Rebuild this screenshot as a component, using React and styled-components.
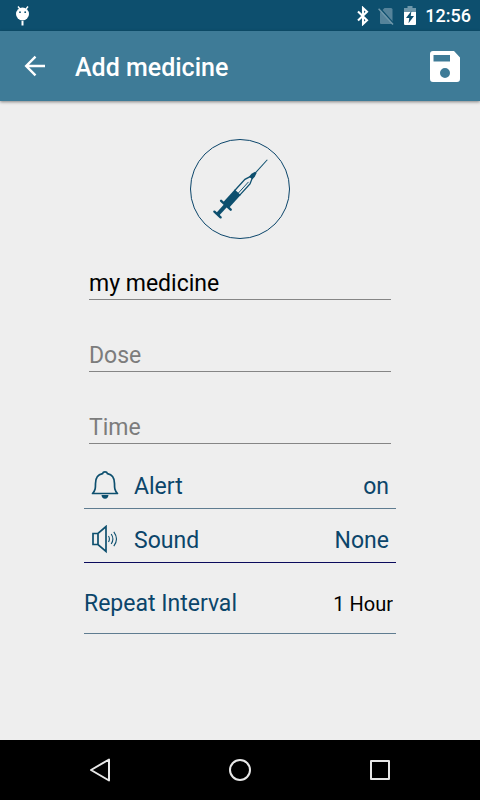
import React, {useState} from 'react';

import styled, {createGlobalStyle} from 'styled-components';

const dark = '#0d4f6e';
const ink = '#0b456a';

const App = () => {

	const [name, setName] = useState('my medicine');
	const [dose, setDose] = useState('');
	const [time, setTime] = useState('');
	const [alert, setAlert] = useState(true);
	const [sound, setSound] = useState(false);
	const [interval, setInterval] = useState('1 Hour');

	return (
		<Screen>
			<GlobalStyle />
			<StatusBar>
				<MascotIcon />
				<StatusIcons>
					<BluetoothIcon />
					<NoSimIcon />
					<BatteryIcon />
					<Clock>12:56</Clock>
				</StatusIcons>
			</StatusBar>

			<Toolbar>
				<IconButton type="button" aria-label="Back">
					<BackIcon />
				</IconButton>
				<Title>Add medicine</Title>
				<IconButton type="button" aria-label="Save">
					<SaveIcon />
				</IconButton>
			</Toolbar>

			<Content>
				<Form>
					<Picture type="button" aria-label="Medicine type">
						<SyringeIcon />
					</Picture>
					<Fields>
						<Field aria-label="Name" placeholder="Name" value={name} onChange={e => setName(e.target.value)} />
						<Field aria-label="Dose" placeholder="Dose" value={dose} onChange={e => setDose(e.target.value)} />
						<Field aria-label="Time" placeholder="Time" value={time} onChange={e => setTime(e.target.value)} />
					</Fields>
					<Options>
						<OptionRow type="button" onClick={() => setAlert(!alert)}>
							<BellIcon />
							<OptionName>Alert</OptionName>
							<OptionValue>{alert ? 'on' : 'off'}</OptionValue>
						</OptionRow>
						<OptionRow type="button" $line="#0a0a5c" onClick={() => setSound(!sound)}>
							<SpeakerIcon />
							<OptionName>Sound</OptionName>
							<OptionValue>{sound ? 'Default' : 'None'}</OptionValue>
						</OptionRow>
						<IntervalRow>
							<label htmlFor="interval">Repeat Interval</label>
							<Select id="interval" value={interval} onChange={e => setInterval(e.target.value)}>
								<option>1 Hour</option>
								<option>4 Hours</option>
								<option>8 Hours</option>
							</Select>
						</IntervalRow>
					</Options>
				</Form>
			</Content>

			<NavBar>
				<NavButton type="button" aria-label="Back">
					<svg width="24" height="26" viewBox="0 0 24 26">
						<path d="M21 2.500v21L3 13z" />
					</svg>
				</NavButton>
				<NavButton type="button" aria-label="Home">
					<svg width="24" height="24" viewBox="0 0 24 24">
						<circle cx="12" cy="12" r="10" />
					</svg>
				</NavButton>
				<NavButton type="button" aria-label="Recent apps">
					<svg width="20" height="20" viewBox="0 0 20 20">
						<rect x="1" y="1" width="18" height="18" />
					</svg>
				</NavButton>
			</NavBar>
		</Screen>
	);
}

export default App;

// icons
const MascotIcon = () => (
	<svg width="14" height="20" viewBox="0 0 14 20">
		<path d="M2 0.5 4 3M12 0.5 10 3" stroke="#fff" strokeWidth="1.4" />
		<circle cx="6.500" cy="8" r="6.500" fill="#fff" />
		<circle cx="4" cy="6.200" r=".9" fill={dark} />
		<circle cx="9.200" cy="6.200" r=".9" fill={dark} />
		<path d="M5.500 15h2v4.500H5.500z" fill="#fff" />
	</svg>
)

const BluetoothIcon = () => (
	<svg width="12" height="20" viewBox="0 0 12 20">
		<path d="M1 5.500 10 14.200 6 18V2L10 5.800 1 14.500" fill="none" stroke="#fff" strokeWidth="2.100" />
	</svg>
)

const NoSimIcon = () => (
	<svg width="17" height="19" viewBox="0 0 17 19">
		<path d="M6.500 2H13q1.500 0 1.500 1.500V17q0 1-1 1H3q-1 0-1-1V6.500z" fill="#55839a" />
		<path d="M2 2.300 16 18" stroke={dark} strokeWidth="1.600" />
		<path d="M.6 2.800 15 18.400" stroke="#6f97aa" strokeWidth="1.500" />
	</svg>
)

const BatteryIcon = () => (
	<svg width="12" height="19" viewBox="0 0 12 19">
		<path d="M3.500 0h5v2H12v4H0V2h3.500z" fill="#6f97aa" />
		<path d="M0 6h12v12q0 1-1 1H1q-1 0-1-1z" fill="#fff" />
		<path d="M7.400 5 2 12h3.300l-.8 5.200L10 10H6.700z" fill={dark} />
	</svg>
)

const BackIcon = () => (
	<svg width="22" height="22" viewBox="0 0 22 22">
		<path d="M21 11H3M11.500 1.700 2.200 11l9.300 9.300" fill="none" stroke="#fff" strokeWidth="2.400" />
	</svg>
)

const SaveIcon = () => (
	<svg width="30" height="31" viewBox="0 0 30 31">
		<path fillRule="evenodd" fill="#fff" d="M3 0h21l6 6.500V28q0 3-3 3H3q-3 0-3-3V3q0-3 3-3zM3.500 4v6.500h16.500V4zM15 17a5 5 0 1 0 0 10 5 5 0 1 0 0-10z" />
	</svg>
)

const SyringeIcon = () => (
	<svg width="98" height="98" viewBox="1 1 98 98">
		<g transform="translate(27.5 75.5) rotate(-47.7)" fill="none" stroke={dark}>
			<path d="M0-4.200V4.200M12.500-6.500V6.500" strokeWidth="2.400" strokeLinecap="round" />
			<path d="M0 0H13" strokeWidth="4" />
			<path d="M12.500-4H30V4H12.500z" fill={dark} stroke="none" />
			<path d="M29-3.400H44.500L50-1.300V1.300L44.500 3.400H29" strokeWidth="1.300" />
			<path d="M29 1H45" strokeWidth=".9" />
			<path d="M49.500-2.200H53L57-1V1L53 2.200H49.500z" fill={dark} stroke="none" />
			<path d="M56 0H74" strokeWidth="1" />
		</g>
	</svg>
)

const BellIcon = () => (
	<svg width="28" height="30" viewBox="0 0 28 30">
		<path d="M1.500 22.500c3-3 3-5.500 3-10C4.500 7 7.500 3.500 11.500 2.700Q12 .9 14 .9T16.500 2.700C20.500 3.500 23.500 7 23.500 12.500c0 4.500 0 7 3 10z" fill="none" stroke={dark} strokeWidth="1.700" strokeLinejoin="round" />
		<path d="M10.500 24h7q-.3 3.700-3.500 3.700T10.500 24z" fill={dark} />
	</svg>
)

const SpeakerIcon = () => (
	<svg width="28" height="30" viewBox="0 0 28 30" fill="none" stroke={dark}>
		<path d="M2 8.500H7L15 1.500V26.500L7 19.500H2zM7 8.500V19.500" strokeWidth="1.700" />
		<path d="M17.500 11q1.800 3 0 6M20.200 9q3.400 5 0 10M22.800 6.800q5.400 7.200 0 14.400" strokeWidth="1.100" />
	</svg>
)

// styles
const GlobalStyle = createGlobalStyle`
	body {
		margin: 0;
		background: #eee;
		font-family: Roboto, "Liberation Sans", sans-serif;
	}
	*, *::before, *::after {
		box-sizing: border-box;
	}
	button, input, select {
		font: inherit;
		color: inherit;
		background: none;
		border: 0;
		border-radius: 0;
		padding: 0;
		margin: 0;
	}
	button {
		cursor: pointer;
	}
	svg {
		display: block;
		flex: none;
	}
`
const Screen = styled.div`
	display: flex;
	flex-direction: column;
	min-height: 100vh;
`
const StatusBar = styled.div`
	display: flex;
	align-items: center;
	justify-content: space-between;
	height: 31px;
	padding: 0 9px 0 16px;
	background: ${dark};
	color: #fff;
`
const StatusIcons = styled.div`
	display: flex;
	align-items: center;
	gap: 9px;
`
const Clock = styled.span`
	padding-top: 1px;
	font-size: 18px;
	font-weight: 500;
	line-height: 20px;
`
const Toolbar = styled.header`
	display: flex;
	align-items: center;
	height: 70px;
	padding: 0 10px;
	background: #3e7b97;
	color: #fff;
	box-shadow: 0 1px 3px rgba(0,0,0,.45);
`
const IconButton = styled.button`
	display: flex;
	align-items: center;
	justify-content: center;
	width: 50px;
	height: 50px;
`
const Title = styled.h1`
	flex: 1;
	margin: 0;
	padding: 4px 0 0 15px;
	font-size: 25px;
	font-weight: 500;
	line-height: 30px;
`
const Content = styled.main`
	flex: 1;
	padding: 38px 0;
`
const Form = styled.form`
	display: flex;
	flex-direction: column;
	width: 65%;
	margin: 0 auto;
	font-size: 23px;
	line-height: 28px;
`
const Picture = styled.button`
	align-self: center;
	width: 100px;
	height: 100px;
	border: 1px solid ${ink};
	border-radius: 50%;
`
const Fields = styled.div`
	display: flex;
	flex-direction: column;
	gap: 39px;
	padding: 28px 5px 0;
`
const Field = styled.input`
	width: 100%;
	height: 33px;
	padding-top: 1px;
	border-bottom: 1px solid #858585;
	color: #000;
	outline: none;
	&::placeholder {
		color: #7c7c7c;
		opacity: 1;
	}
`
const Options = styled.div`
	display: flex;
	flex-direction: column;
	gap: 9px;
	padding-top: 20px;
	color: ${ink};
`
const OptionRow = styled.button`
	display: flex;
	align-items: center;
	gap: 15px;
	height: 45px;
	padding: 0 7px;
	border-bottom: 1px solid ${props => props.$line || '#5f7c90'};
	text-align: left;
`
const OptionName = styled.span`
	flex: 1;
	padding-top: 2px;
`
const OptionValue = styled.span`
	padding-top: 2px;
`
const IntervalRow = styled.div`
	display: flex;
	align-items: center;
	justify-content: space-between;
	height: 62px;
	padding: 2px 3px 0 0;
	border-bottom: 1px solid #5f7c90;
`
const Select = styled.select`
	appearance: none;
	color: #000;
	font-size: 20px;
	line-height: 28px;
	text-align-last: right;
`
const NavBar = styled.nav`
	display: grid;
	grid-template-columns: repeat(3, 1fr);
	height: 60px;
	padding: 0 30px;
	background: #000;
`
const NavButton = styled.button`
	display: flex;
	align-items: center;
	justify-content: center;
	svg {
		fill: none;
		stroke: #e8e8e8;
		stroke-width: 2;
		stroke-linejoin: round;
	}
`
